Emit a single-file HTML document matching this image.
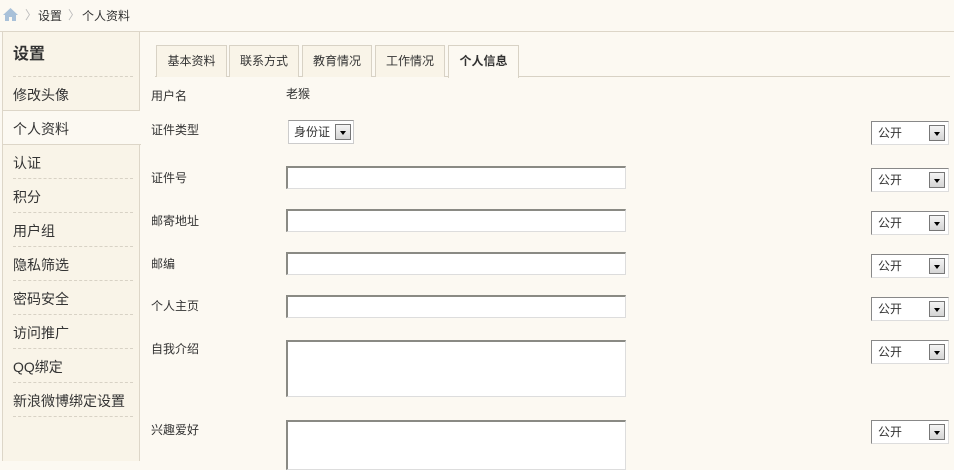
<!DOCTYPE html>
<html><head><meta charset="utf-8"><style>
*{margin:0;padding:0;box-sizing:border-box}
body{width:954px;height:456px;overflow:hidden;background:#fcf9f2;font-family:"Liberation Sans","Noto Sans CJK SC",sans-serif;font-size:12px;color:#333;position:relative}
.a{position:absolute}
.side{left:2px;top:31px;width:138px;height:430px;background:#f9f4e8;border:1px solid #ddd6c8;border-bottom:none}
.item{position:absolute;left:10px;width:120px;height:34px;line-height:34px;font-size:14px;border-bottom:1px dashed #d8d2c5;color:#333}
.tab{position:absolute;top:45px;height:32px;line-height:30px;text-align:center;border:1px solid #d8d2c5;border-bottom:none;background:#f9f4e8;font-size:12px}
.lbl{position:absolute;left:151px;font-size:12px;color:#333}
.inp{position:absolute;left:286px;width:340px;height:23px;background:#fff;border:1px solid #ddd;border-top:2px solid #8a8a84;border-left:2px solid #8a8a84}
.sel{position:absolute;left:871px;width:78px;height:24px;background:#fff;border:1px solid #888;border-right-color:#ddd;border-bottom-color:#ddd;font-size:12px;line-height:22px;padding-left:6px}
.sel b,.s2 b{position:absolute;right:3px;top:3px;width:16px;height:16px;border:1px solid #777;background:linear-gradient(#f4f4f4,#d4d4d4)}
.sel b:after,.s2 b:after{content:"";position:absolute;left:4px;top:6px;border-left:3px solid transparent;border-right:3px solid transparent;border-top:4px solid #000}
</style></head><body>
<svg class="a" style="left:3px;top:8px" width="15" height="13" viewBox="0 0 15 13"><path d="M7.5 0L0 7h2v6h4V9h3v4h4V7h2z" fill="#a9c1d9"/></svg>
<div class="a" style="left:25px;top:6px;color:#bbb">〉</div>
<div class="a" style="left:38px;top:7px">设置</div>
<div class="a" style="left:68px;top:6px;color:#bbb">〉</div>
<div class="a" style="left:82px;top:7px">个人资料</div>
<div class="a" style="left:0;top:31px;width:954px;border-top:1px solid #ddd6c8"></div>
<div class="a side">
<div class="item" style="top:0;height:45px;line-height:46px;font-size:16px;font-weight:bold">设置</div>
<div class="item" style="top:45px;border-bottom:1px solid #ddd6c8;left:0;width:137px;padding-left:10px;line-height:36px">修改头像</div>
<div class="item" style="top:79px;left:0;width:138px;padding-left:10px;background:#fcf9f2;border-bottom:1px solid #ddd6c8;line-height:36px">个人资料</div>
<div class="item" style="top:113px;line-height:36px">认证</div>
<div class="item" style="top:147px;line-height:36px">积分</div>
<div class="item" style="top:181px;line-height:36px">用户组</div>
<div class="item" style="top:215px;line-height:36px">隐私筛选</div>
<div class="item" style="top:249px;line-height:36px">密码安全</div>
<div class="item" style="top:283px;line-height:36px">访问推广</div>
<div class="item" style="top:317px;line-height:36px">QQ绑定</div>
<div class="item" style="top:351px;line-height:36px">新浪微博绑定设置</div>
</div>
<div class="a" style="left:155px;top:76px;width:795px;border-top:1px solid #d8d2c5"></div>
<div class="tab" style="left:156px;width:71px">基本资料</div>
<div class="tab" style="left:229px;width:70px">联系方式</div>
<div class="tab" style="left:302px;width:70px">教育情况</div>
<div class="tab" style="left:375px;width:70px">工作情况</div>
<div class="tab" style="left:448px;width:71px;background:#fcf9f2;height:33px;font-weight:bold">个人信息</div>
<div class="lbl" style="top:87px">用户名</div><div class="a" style="left:286px;top:85px">老猴</div>
<div class="lbl" style="top:121px">证件类型</div>
<div class="s2 a" style="left:288px;top:120px;width:66px;height:24px;background:#fff;border:1px solid #ccc;border-top-color:#999;padding-left:5px;line-height:23px">身份证<b style="right:2px"></b></div>
<div class="lbl" style="top:169px">证件号</div>
<div class="lbl" style="top:212px">邮寄地址</div>
<div class="lbl" style="top:255px">邮编</div>
<div class="lbl" style="top:297px">个人主页</div>
<div class="lbl" style="top:340px">自我介绍</div>
<div class="lbl" style="top:421px">兴趣爱好</div>
<div class="inp" style="top:166px"></div>
<div class="inp" style="top:209px"></div>
<div class="inp" style="top:252px"></div>
<div class="inp" style="top:295px"></div>
<div class="inp" style="top:340px;height:57px"></div>
<div class="inp" style="top:420px;height:50px"></div>
<div class="sel" style="top:121px">公开<b></b></div>
<div class="sel" style="top:168px">公开<b></b></div>
<div class="sel" style="top:211px">公开<b></b></div>
<div class="sel" style="top:254px">公开<b></b></div>
<div class="sel" style="top:297px">公开<b></b></div>
<div class="sel" style="top:340px">公开<b></b></div>
<div class="sel" style="top:420px">公开<b></b></div>
</body></html>
